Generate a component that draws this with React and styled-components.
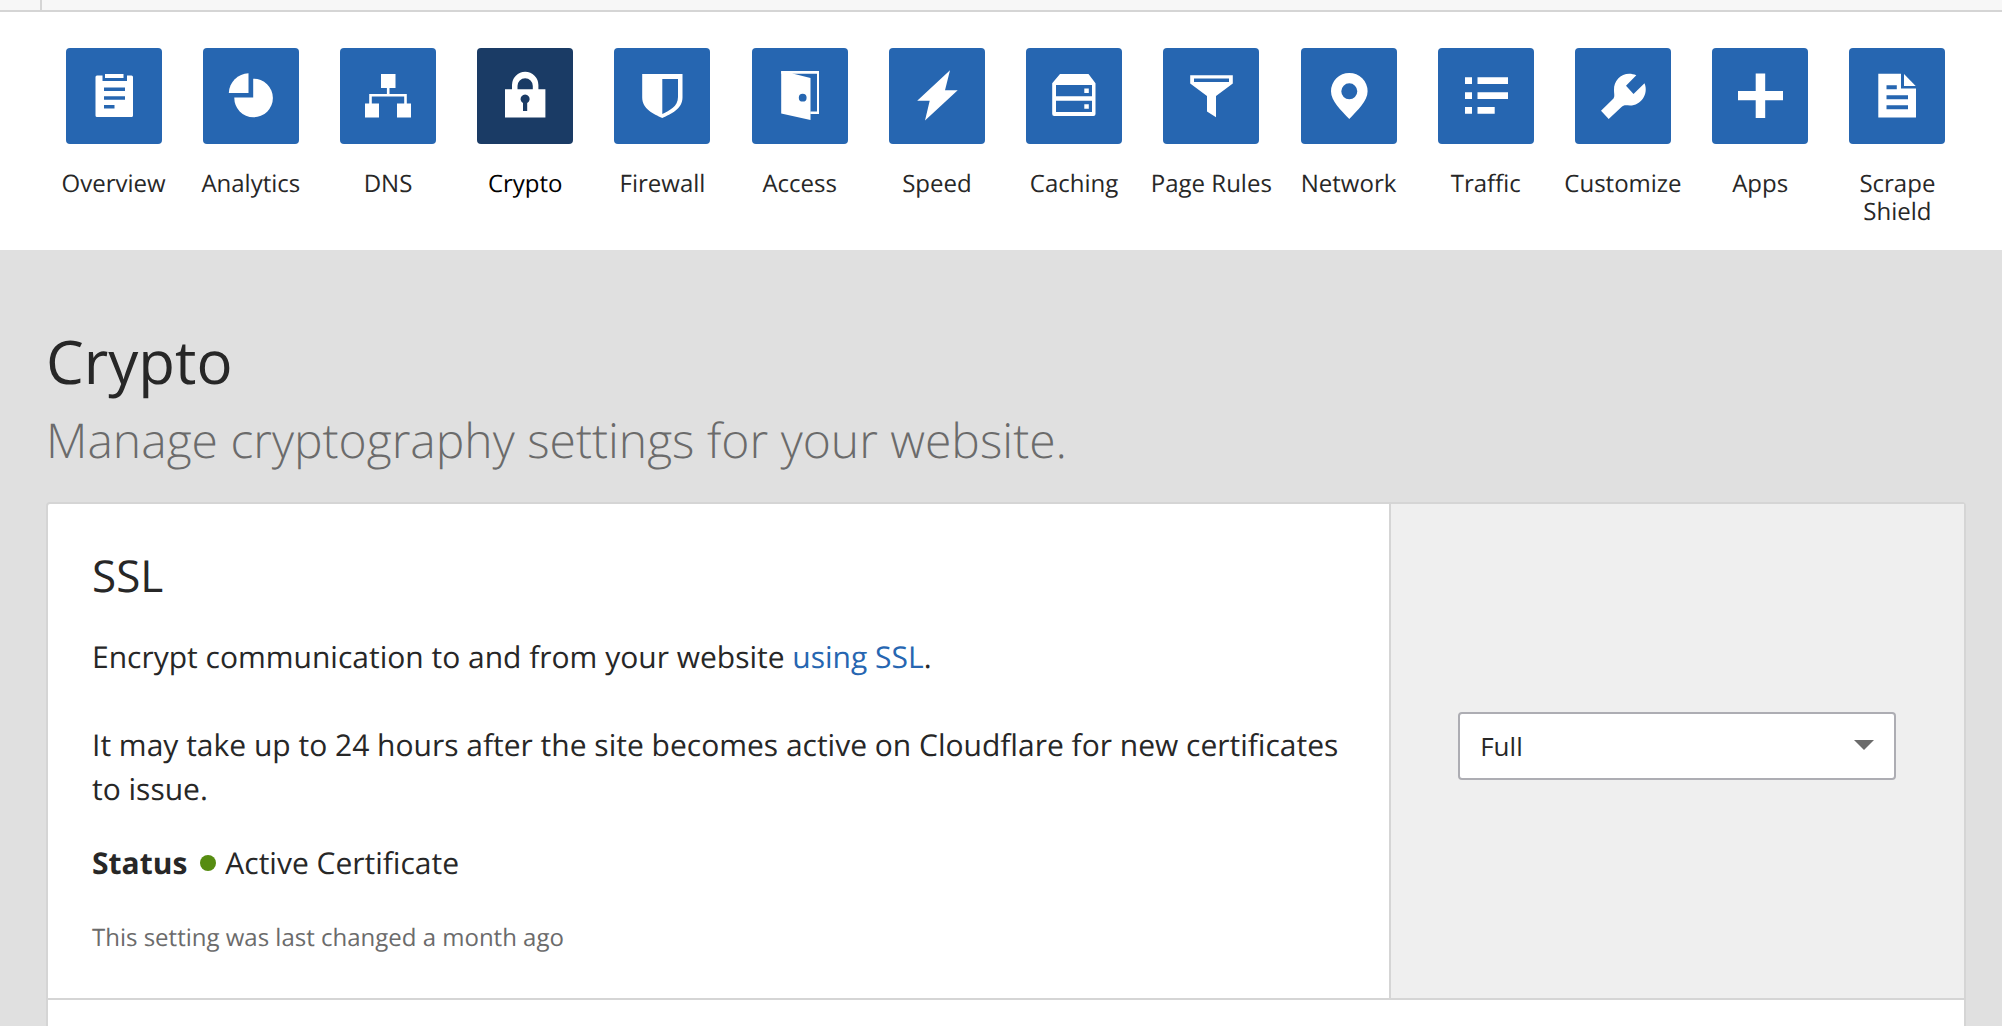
import React from "react";
import styled, { createGlobalStyle } from "styled-components";

const color = {
  text: "#272727",
  muted: "#6b6b6b",
  blue: "#2666b1",
  navy: "#1a3b65",
  page: "#e0e0e0",
  line: "#d5d5d5",
  field: "#adadb3",
  green: "#568c11",
};

const GlobalStyle = createGlobalStyle`
  *, *::before, *::after { box-sizing: border-box; }
  body {
    margin: 0;
    background: ${color.page};
    color: ${color.text};
    font-family: "Open Sans", "Noto Sans", sans-serif;
    font-size: 30px;
    line-height: 44px;
    text-rendering: geometricPrecision;
  }
  h1, h2, p, ul { margin: 0; padding: 0; }
`;

const Page = styled.div`
  min-height: 100vh;
  display: flex;
  flex-direction: column;
  overflow: hidden;
`;

const TopBar = styled.div`
  height: 12px;
  padding-left: 40px;
  display: flex;
  background: #f7f7f7;
  border-bottom: 2px solid ${color.line};
`;

const TopBarDivider = styled.span`
  width: 2px;
  background: ${color.line};
`;

const Nav = styled.nav`
  background: #fff;
  padding: 36px 36px 24px 45px;
`;

const NavList = styled.ul`
  list-style: none;
  display: grid;
  grid-template-columns: repeat(14, minmax(0, 1fr));
`;

const NavLink = styled.a`
  display: flex;
  flex-direction: column;
  align-items: center;
  gap: 26px;
  color: ${(p) => (p.$active ? "#000" : color.text)};
  font-size: 24px;
  line-height: 28px;
  text-align: center;
  text-decoration: none;
`;

const Tile = styled.span`
  width: 96px;
  height: 96px;
  border-radius: 4px;
  background: ${(p) => (p.$active ? color.navy : color.blue)};
  svg { display: block; fill: #fff; }
`;

const Main = styled.main`
  flex: 1;
  display: flex;
  flex-direction: column;
  padding: 72px 36px 0 46px;
`;

const Title = styled.h1`
  font-size: 60px;
  line-height: 78px;
  font-weight: 400;
`;

const Subtitle = styled.p`
  font-size: 48px;
  line-height: 82px;
  font-weight: 300;
  color: ${color.muted};
  margin-bottom: 20px;
`;

const Card = styled.div`
  flex: 1;
  background: #fff;
  border: 2px solid ${color.line};
  border-bottom: 0;
  border-radius: 4px 4px 0 0;
`;

const Setting = styled.section`
  display: flex;
  border-bottom: 2px solid ${color.line};
`;

const SettingBody = styled.div`
  flex: 1;
  padding: 40px 44px 42px;
`;

const SettingTitle = styled.h2`
  font-size: 44px;
  line-height: 62px;
  font-weight: 400;
  margin-bottom: 29px;
`;

const Text = styled.p`
  margin-bottom: ${(p) => p.$gap}px;
`;

const Link = styled.a`
  color: ${color.blue};
  text-decoration: none;
`;

const Status = styled.p`
  display: flex;
  align-items: center;
  margin-bottom: 35px;
`;

const Dot = styled.span`
  width: 16px;
  height: 16px;
  margin: 0 9px 0 13px;
  border-radius: 50%;
  background: ${color.green};
`;

const Note = styled.p`
  font-size: 24px;
  line-height: 36px;
  color: ${color.muted};
`;

const SettingControl = styled.div`
  flex: 0 0 30%;
  display: flex;
  align-items: center;
  padding: 0 68px 10px 67px;
  background: #efefef;
  border-left: 2px solid ${color.line};
`;

const SelectBox = styled.label`
  position: relative;
  flex: 1;
  display: block;
`;

const Select = styled.select`
  display: block;
  width: 100%;
  height: 68px;
  padding: 0 60px 0 20px;
  appearance: none;
  background: #fff;
  border: 2px solid ${color.field};
  border-radius: 4px;
  color: ${color.text};
  font: inherit;
  font-size: 26px;
`;

const Caret = styled.svg`
  position: absolute;
  right: 22px;
  top: 28px;
  fill: ${color.muted};
  pointer-events: none;
`;

/* Glyphs are drawn on the 96px grid of their tile. */
const glyphs = {
  overview: (
    <>
      <path fillRule="evenodd" d="M31 27.500h5.500V33h24.500v-5.500H65.500a1.500 1.500 0 0 1 1.500 1.500V67.500a1.500 1.500 0 0 1-1.500 1.500H31a1.500 1.500 0 0 1-1.500-1.500V29a1.500 1.500 0 0 1 1.500-1.500ZM38 39.500v3.500h21v-3.500ZM38 48.300v3.500h21v-3.500ZM38 57v3.500h10.500v-3.500Z" />
      <path d="M39 26h18.500v4H39z" />
    </>
  ),
  analytics: (
    <>
      <path d="M45.500 25.200V45H25.800A20.500 20.500 0 0 1 45.500 25.200Z" />
      <path d="M50.200 30.700A19.300 19.300 0 1 1 31.300 49.500H50.200Z" />
    </>
  ),
  dns: (
    <>
      <path d="M41 26h14.500v14H41zM25 55.500h14V69.500H25zM57 55.500h14V69.500H57z" />
      <path d="M30.500 56v-8.700h35v8.700M48.200 39v8" fill="none" stroke="#fff" strokeWidth="2.600" />
    </>
  ),
  crypto: (
    <path fillRule="evenodd" d="M28 41.200h7V37a13.200 13.200 0 0 1 26.400 0v4.200h7V69.500H28ZM40.500 41.200h15.300V38a7.650 7.650 0 0 0-15.300 0ZM46 55v8h4.200v-8a4.500 4.500 0 1 0-4.200 0Z" />
  ),
  firewall: (
    <path fillRule="evenodd" d="M28.200 26H68.500V49.500C68.500 61 57 66 48.300 70 39.500 66 28.200 61 28.200 49.500ZM48.300 31V66C55.500 62.500 64 58.500 64 49V31Z" />
  ),
  access: (
    <>
      <path fillRule="evenodd" d="M29.200 23.300H41L40.500 25.500 58.500 30V72L29.200 65.500ZM50.700 45.800a3.900 3.900 0 1 0 0 7.800 3.900 3.900 0 0 0 0-7.800Z" />
      <path d="M29.200 23H67v43h-8.700v-2.500H65V25.800H29.200z" />
    </>
  ),
  speed: <path d="M61 22.300 56 42.200H68.700L36 72.600 40.700 52.800H28.200Z" />,
  caching: (
    <>
      <path fillRule="evenodd" d="M34 26H62.500L69.500 35.300V66a2 2 0 0 1-2 2H28.200a2 2 0 0 1-2-2V35.300ZM30 37v11.300h36V37ZM30 52.800V64h36V52.800Z" />
      <path d="M58.300 40.500h4.500V45h-4.500zM58.300 56.200h4.500v4.500h-4.500z" />
    </>
  ),
  rules: (
    <path fillRule="evenodd" d="M27.200 27.200H69.800V35.500L53 48V69.200L44 63.500V48L27.200 35.500ZM31 30.500V34H66V30.500Z" />
  ),
  network: (
    <path fillRule="evenodd" d="M48.300 25a18.200 18.200 0 0 1 18.300 18.200C66.600 53 56.500 62 48.300 71 40 62 30 53 30 43.200A18.200 18.200 0 0 1 48.300 25ZM48.300 35.300a8 8 0 1 0 0 16 8 8 0 0 0 0-16Z" />
  ),
  traffic: (
    <path d="M27 29.300h7V36h-7zM39.500 29.300H70V36H39.500zM27 44.200h7v6.700h-7zM39.500 44.200H70v6.700H39.500zM27 59h7v6.700h-7zM39.500 59H56.700v6.700H39.500z" />
  ),
  customize: (
    <path d="M61.300 27.300 51 37.700 58.500 46 69.500 35.200C74 46 66 57.500 55 57.500 50 57 48.500 57 46.500 59L33.700 71 26 62.700 38.500 50.500C40 48 39 46 39 42 38.500 31 49.500 22 61.300 27.300Z" />
  ),
  apps: <path d="M43.700 25.600h9.500V43H71v9.300H53.200V70H43.700V52.300H26V43H43.700Z" />,
  scrape: (
    <>
      <path fillRule="evenodd" d="M29.300 25.700H52V40.500H67V69.500H29.300ZM37.500 37.300v4h10.300v-4ZM37.500 47.300v4H59v-4ZM37.500 57.300v4H59v-4Z" />
      <path d="M55 26 66.700 38H55Z" />
    </>
  ),
};

const items = [
  ["Overview", "overview"],
  ["Analytics", "analytics"],
  ["DNS", "dns"],
  ["Crypto", "crypto"],
  ["Firewall", "firewall"],
  ["Access", "access"],
  ["Speed", "speed"],
  ["Caching", "caching"],
  ["Page Rules", "rules"],
  ["Network", "network"],
  ["Traffic", "traffic"],
  ["Customize", "customize"],
  ["Apps", "apps"],
  ["Scrape Shield", "scrape"],
];

export default function App() {
  return (
    <Page>
      <GlobalStyle />
      <TopBar>
        <TopBarDivider />
      </TopBar>
      <Nav>
        <NavList>
          {items.map(([label, icon]) => {
            const active = icon === "crypto";
            return (
              <li key={icon}>
                <NavLink href={"#" + icon} $active={active} aria-current={active ? "page" : undefined}>
                  <Tile $active={active}>
                    <svg width="96" height="96" viewBox="0 0 96 96" aria-hidden="true">
                      {glyphs[icon]}
                    </svg>
                  </Tile>
                  {label}
                </NavLink>
              </li>
            );
          })}
        </NavList>
      </Nav>
      <Main>
        <Title>Crypto</Title>
        <Subtitle>Manage cryptography settings for your website.</Subtitle>
        <Card>
          <Setting>
            <SettingBody>
              <SettingTitle id="ssl-title">SSL</SettingTitle>
              <Text $gap={44}>
                Encrypt communication to and from your website <Link href="#ssl">using SSL</Link>.
              </Text>
              <Text $gap={30}>
                It may take up to 24 hours after the site becomes active on Cloudflare for new
                certificates to issue.
              </Text>
              <Status>
                <strong>Status</strong>
                <Dot />
                Active Certificate
              </Status>
              <Note>This setting was last changed a month ago</Note>
            </SettingBody>
            <SettingControl>
              <SelectBox>
                <Select aria-labelledby="ssl-title" defaultValue="Full">
                  <option>Full</option>
                </Select>
                <Caret width="20" height="10" viewBox="0 0 20 10" aria-hidden="true">
                  <path d="M0 0h20L10 10z" />
                </Caret>
              </SelectBox>
            </SettingControl>
          </Setting>
        </Card>
      </Main>
    </Page>
  );
}
